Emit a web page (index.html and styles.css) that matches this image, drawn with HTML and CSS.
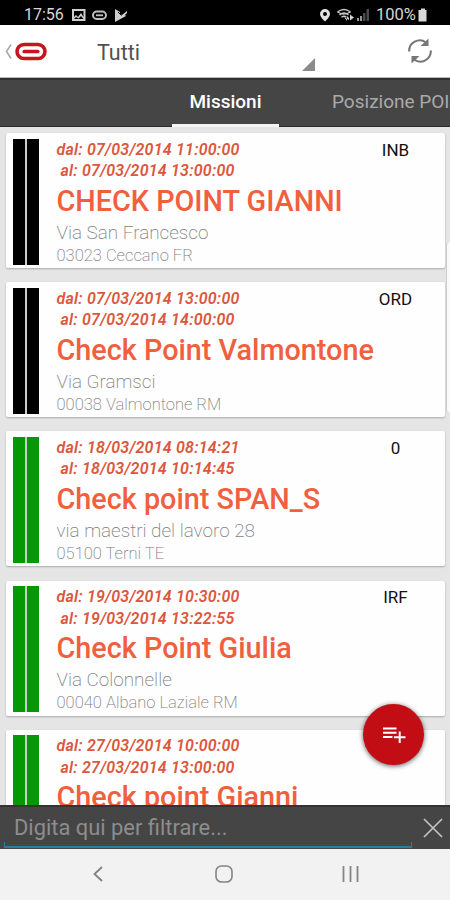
FILE: index.html
```
<!DOCTYPE html>
<html lang="it">
<head>
<meta charset="utf-8">
<title>Missioni</title>
<link rel="stylesheet" href="styles.css">
</head>
<body>
<div class="screen">
  <div class="status">
    <span class="clock">17:56</span>
    <svg class="status-left" width="56" height="14" viewBox="0 0 56 14">
      <path fill="#cfcfcf" fill-rule="evenodd" d="M0 1h13.500v12H0zM2 3v6l2-2 2 2 3-4 2.500 4V3zM2 11h9.500L9 8 6.500 10.500 4 9z"/>
      <rect x="21" y="3.500" width="13" height="7.500" rx="3.700" fill="none" stroke="#bdbdbd" stroke-width="2"/>
      <path d="M24 7.300h7" stroke="#bdbdbd" stroke-width="1.800"/>
      <path fill="#cfcfcf" d="M43 1l5 3v2l2 1 5-4v2l-2 2 1 1-11 6z"/>
      <path d="M46 4l3.500 3.500" fill="none" stroke="#000" stroke-width="1"/>
    </svg>
    <svg class="status-right" width="52" height="14" viewBox="0 0 52 14">
      <path fill="#e0e0e0" fill-rule="evenodd" d="M6 1a5 5 0 0 0-5 5c0 3 5 7.500 5 7.500S11 9 11 6a5 5 0 0 0-5-5zm0 3a2 2 0 1 1 0 4 2 2 0 0 1 0-4z"/>
      <g fill="none" stroke="#c8c8c8" stroke-width="1.400"><path d="M18.500 4q6.500-5 13 0M20.500 7q4.500-4 9 0M22.500 9.300q2.500-2 5 0"/><path d="M18.500 4q6 4 13 0"/></g>
      <path fill="#d0d0d0" d="M25 9l3 4V8l2 2v2zM31 6.500l4 3-4 3z"/>
      <path fill="#999" d="M38 10h2v3h-2zM41 8h2v5h-2z"/><path fill="#4b4b4b" d="M44 5h2.500v8H44zM47.500 1H50v12h-2.500z"/>
    </svg>
    <span class="percent">100%</span>
    <svg width="10" height="14" viewBox="0 0 10 14"><path fill="#d8d8d8" d="M3 .5h4V2h1.500v11.500h-8V2H3z"/></svg>
  </div>
  <div class="appbar">
    <svg class="brand" width="44" height="20" viewBox="0 0 44 20">
      <path d="M7 3.500L2.500 10.500l4.500 7" fill="none" stroke="#aaa" stroke-width="1.600"/>
      <rect x="13" y="3.500" width="28" height="14" rx="7" fill="none" stroke="#c8141c" stroke-width="3.600"/>
      <rect x="18.500" y="8.700" width="17" height="3.600" rx="1.600" fill="#c8141c"/>
    </svg>
    <span class="spinner">Tutti</span>
    <svg class="corner" width="13" height="13" viewBox="0 0 13 13"><path d="M13 0v13H0z" fill="#8b8b8b"/></svg>
    <svg class="refresh" width="26" height="26" viewBox="0 0 26 26">
      <g fill="none" stroke="#777" stroke-width="2.100"><path d="M2.200 13.500A10.500 10.500 0 0 1 19 4.500M23.800 12.500A10.500 10.500 0 0 1 7 21.500"/></g>
      <path fill="#777" d="M21.500.5v7.500h-8zM4.500 25.500V18h8z"/>
    </svg>
  </div>
  <div class="tabs">
    <div class="tab active">Missioni</div>
    <div class="tab next">Posizione POI</div>
  </div>
  <div class="list">
    <div class="card">
      <div class="stripes black"><i></i><i></i></div>
      <div class="body"><div class="date">dal: 07/03/2014 11:00:00</div><div class="date to">al: 07/03/2014 13:00:00</div><div class="title">CHECK POINT GIANNI</div><div class="street">Via San Francesco</div><div class="city">03023 Ceccano FR</div></div>
      <div class="code">INB</div>
    </div>
    <div class="card">
      <div class="stripes black"><i></i><i></i></div>
      <div class="body"><div class="date">dal: 07/03/2014 13:00:00</div><div class="date to">al: 07/03/2014 14:00:00</div><div class="title">Check Point Valmontone</div><div class="street">Via Gramsci</div><div class="city">00038 Valmontone RM</div></div>
      <div class="code">ORD</div>
    </div>
    <div class="card">
      <div class="stripes green"><i></i><i></i></div>
      <div class="body"><div class="date">dal: 18/03/2014 08:14:21</div><div class="date to">al: 18/03/2014 10:14:45</div><div class="title">Check point SPAN_S</div><div class="street">via maestri del lavoro 28</div><div class="city">05100 Terni TE</div></div>
      <div class="code">0</div>
    </div>
    <div class="card">
      <div class="stripes green"><i></i><i></i></div>
      <div class="body"><div class="date">dal: 19/03/2014 10:30:00</div><div class="date to">al: 19/03/2014 13:22:55</div><div class="title">Check Point Giulia</div><div class="street">Via Colonnelle</div><div class="city">00040 Albano Laziale RM</div></div>
      <div class="code">IRF</div>
    </div>
    <div class="card">
      <div class="stripes green"><i></i><i></i></div>
      <div class="body"><div class="date">dal: 27/03/2014 10:00:00</div><div class="date to">al: 27/03/2014 13:00:00</div><div class="title">Check point Gianni</div></div>
    </div>
    <div class="scrollbar"></div>
    <div class="fab">
      <svg width="24" height="18" viewBox="0 0 24 18"><path d="M1 2.500h13.500M1 6.700h13.500M1 10.900h9.500M17.700 5.500v11.500M12 11.200h11.500" stroke="#fff" stroke-width="2" fill="none"/></svg>
    </div>
  </div>
  <div class="filter">
    <div class="field">Digita qui per filtrare...</div>
    <svg class="close" width="20" height="20" viewBox="0 0 20 20"><path d="M1 1l18 18M19 1L1 19" stroke="#c4c4c4" stroke-width="1.700"/></svg>
  </div>
  <div class="nav">
    <svg width="10" height="16" viewBox="0 0 10 16"><path d="M9 1L1.500 8 9 15" fill="none" stroke="#808080" stroke-width="1.800"/></svg>
    <svg class="home" width="18" height="18" viewBox="0 0 18 18"><rect x="1" y="1" width="16" height="16" rx="5.500" fill="none" stroke="#858585" stroke-width="1.600"/></svg>
    <svg width="17" height="16" viewBox="0 0 17 16"><path d="M1.500 0v16M8.500 0v16M15.500 0v16" stroke="#858585" stroke-width="1.800"/></svg>
  </div>
</div>
</body>
</html>
```
FILE: styles.css
```
* { box-sizing: border-box; }
body { margin: 0; font-family: Roboto, "Liberation Sans", sans-serif; }
svg { display: block; flex: none; }
.screen { width: 450px; height: 900px; display: flex; flex-direction: column; overflow: hidden; background: #e5e5e5; }

.status { height: 25px; flex: none; display: flex; align-items: center; padding: 4px 22px 0 24px; background: #000; color: #d6d6d6; font-size: 16px; line-height: 22px; }
.clock { width: 48px; }
.status-right { margin-left: auto; margin-right: 5px; }
.percent { width: 42px; font-size: 16.500px; }

.appbar { height: 53px; flex: none; display: flex; align-items: center; padding-left: 4px; background: #fff; border-bottom: 1px solid #bbb; }
.spinner { margin-left: 49px; margin-top: 2px; width: 205px; font-size: 21.500px; color: #505050; }
.corner { align-self: flex-end; margin-bottom: 6px; }
.refresh { margin-left: 92px; }

.tabs { height: 49px; flex: none; display: flex; background: #454545; border-top: 2px solid #303030; border-bottom: 1px solid #2b2b2b; color: #aaa; font-size: 19px; line-height: 43px; white-space: nowrap; }
.tab { flex: none; }
.tab.active { width: 107px; margin-left: 172px; margin-bottom: -1px; text-align: center; color: #fff; font-weight: 500; border-bottom: 3px solid #f4f4f4; }
.tab.next { margin-left: 53px; }

.list { position: relative; flex: 1; overflow: hidden; padding: 6px 5px 0 6px; background: #e5e5e5; }
.card { height: 135px; margin-bottom: 14.200px; display: flex; padding: 5.500px 0 0 6.500px; background: #fefefe; border-radius: 2px; box-shadow: 0 1px 2px rgba(0,0,0,.25); }
.stripes { display: flex; gap: 2px; width: 26px; height: 126px; background: #ccc; }
.stripes i { flex: 1; }
.black i { background: #000; }
.green i { background: #049804; }
.body { margin-left: 18px; width: 324px; white-space: nowrap; }
.date { font-size: 16px; font-weight: 650; font-style: italic; line-height: 21.500px; letter-spacing: .22px; color: #dc573d; }
.to { padding-left: 4px; }
.title { font-size: 28.800px; line-height: 39.500px; height: 38px; font-weight: 500; color: #f0603f; }
.street { font-size: 18.900px; line-height: 25px; font-weight: 200; color: #7d7d7d; }
.city { font-size: 16.500px; line-height: 21px; font-weight: 200; color: #7d7d7d; }
.code { width: 34px; margin-left: -2px; text-align: center; font-size: 17px; line-height: 22px; color: #111; }
.scrollbar { position: absolute; right: 0; top: 115px; width: 4px; height: 171px; background: #fafafa; border-left: 1px solid #ccc; border-radius: 4px 0 0 4px; }
.fab { position: absolute; left: 363px; top: 577px; width: 61px; height: 61px; border-radius: 50%; background: #c20d14; box-shadow: 0 1px 5px rgba(0,0,0,.65); display: flex; align-items: center; justify-content: center; }

.filter { height: 44px; flex: none; display: flex; align-items: center; padding-left: 4px; background: #454545; border-top: 2px solid #333; }
.field { width: 408px; height: 39px; padding-left: 10px; font-size: 21.900px; line-height: 38px; color: #8d8d8d; border-bottom: 2px solid #287f9e; background: linear-gradient(#287f9e,#287f9e) left bottom/1px 4px no-repeat, linear-gradient(#287f9e,#287f9e) right bottom/1px 4px no-repeat; }
.close { margin-left: 11px; }
.nav { height: 51px; flex: none; display: flex; align-items: center; justify-content: space-between; padding: 0 91px 1px 93px; background: #f2f2f2; }
.home { margin-left: 3px; }
```
